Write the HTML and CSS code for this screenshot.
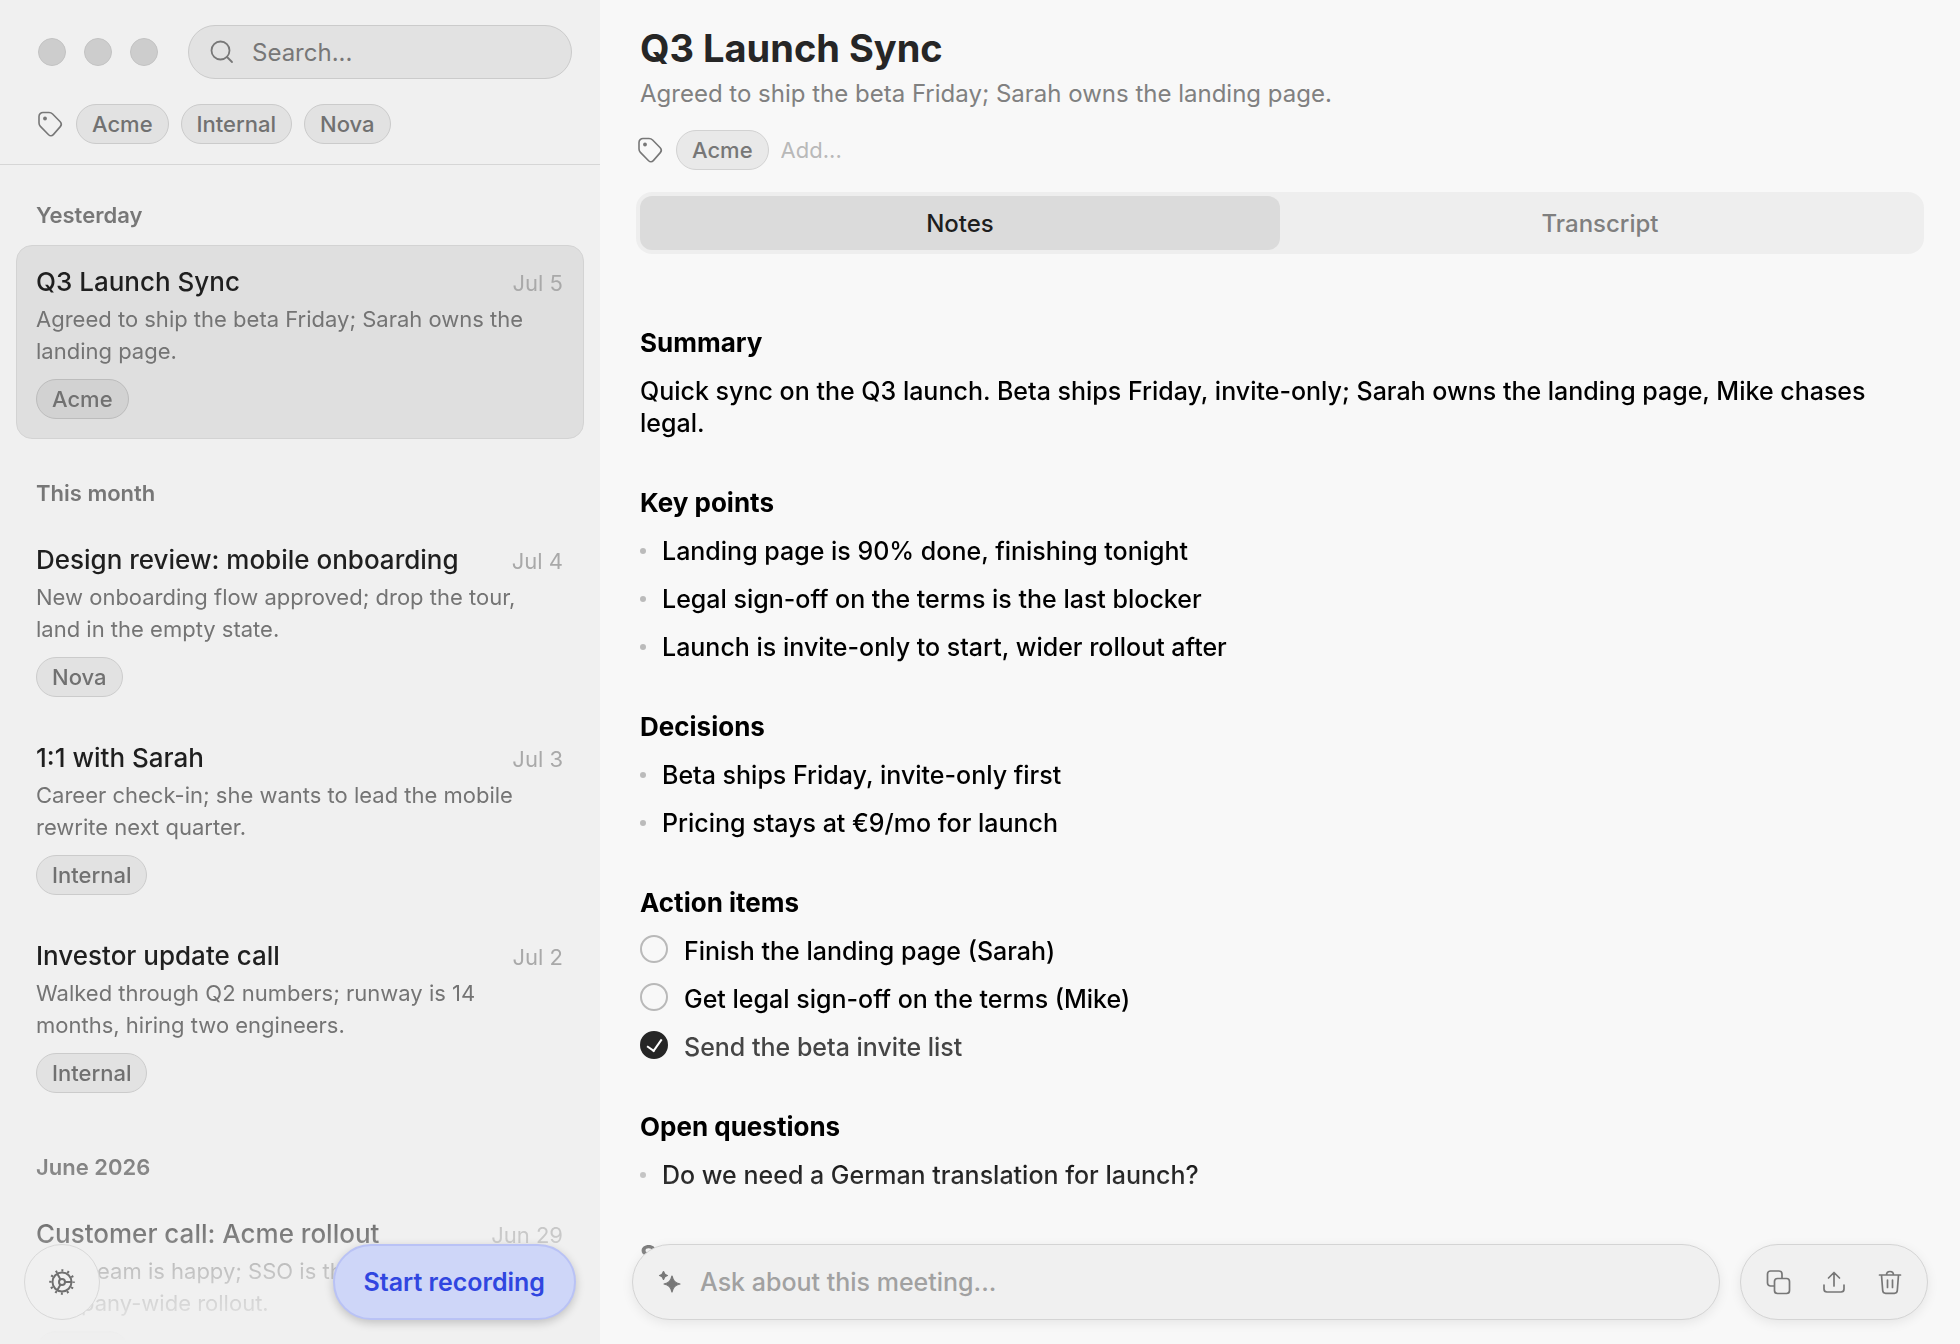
FILE: index.html
```html
<!DOCTYPE html>
<html lang="en">
<head>
<meta charset="utf-8">
<title>Q3 Launch Sync</title>
<link rel="stylesheet" href="styles.css">
</head>
<body>
<svg class="sprite" aria-hidden="true">
  <symbol id="tag" viewBox="1 0 26 28"><path d="M2 6.500a4 4 0 0 1 4-4h6c1.500 0 2.600.5 3.600 1.500l7.600 7.800c1.500 1.600 1.500 3.200.1 4.800l-7 8c-1.400 1.600-3.200 1.600-4.700.1L3.400 16.400C2.500 15.400 2 14.300 2 13Z" fill="none" stroke="currentColor" stroke-width="1.600"/><circle cx="8" cy="8.500" r="1.900" fill="currentColor"/></symbol>
</svg>
<div class="app">
  <aside class="sidebar">
    <header class="side-head">
      <div class="top-row">
        <div class="lights"><i></i><i></i><i></i></div>
        <label class="search">
          <svg width="24" height="24" viewBox="0 0 24 24" fill="none" stroke="currentColor" stroke-width="1.800" stroke-linecap="round"><circle cx="10.500" cy="10.500" r="9"/><path d="m17 17 5 5"/></svg>
          <input type="search" placeholder="Search..." aria-label="Search">
        </label>
      </div>
      <div class="tags">
        <svg class="tag-icon"><use href="#tag"/></svg>
        <button class="chip">Acme</button><button class="chip">Internal</button><button class="chip">Nova</button>
      </div>
    </header>
    <nav class="list">
      <h2 class="group first">Yesterday</h2>
      <a class="item selected" href="#"><span class="row"><b>Q3 Launch Sync</b><time>Jul 5</time></span><span class="desc">Agreed to ship the beta Friday; Sarah owns the landing page.</span><span class="chip">Acme</span></a>
      <h2 class="group">This month</h2>
      <a class="item" href="#"><span class="row"><b>Design review: mobile onboarding</b><time>Jul 4</time></span><span class="desc">New onboarding flow approved; drop the tour, land in the empty state.</span><span class="chip">Nova</span></a>
      <a class="item" href="#"><span class="row"><b>1:1 with Sarah</b><time>Jul 3</time></span><span class="desc">Career check-in; she wants to lead the mobile rewrite next quarter.</span><span class="chip">Internal</span></a>
      <a class="item" href="#"><span class="row"><b>Investor update call</b><time>Jul 2</time></span><span class="desc">Walked through Q2 numbers; runway is 14 months, hiring two engineers.</span><span class="chip">Internal</span></a>
      <h2 class="group">June 2026</h2>
      <a class="item" href="#"><span class="row"><b>Customer call: Acme rollout</b><time>Jun 29</time></span><span class="desc">Data team is happy; SSO is the last step to company-wide rollout.</span><span class="chip">Acme</span></a>
    </nav>
    <footer class="side-foot">
      <button class="round" aria-label="Settings">
        <svg width="28" height="28" viewBox="0 0 28 28" fill="none" stroke="currentColor" stroke-width="2"><circle cx="14" cy="14" r="9.500"/><circle cx="14" cy="14" r="3"/><path d="M17 14h7M12.500 11.400 9.300 5.800M12.500 16.600l-3.200 5.600"/><circle cx="14" cy="14" r="11.600" stroke-width="2.400" stroke-dasharray="2 4.074" stroke-dashoffset="1"/></svg>
      </button>
      <button class="record">Start recording</button>
    </footer>
  </aside>
  <main class="main">
    <header class="main-head">
      <h1>Q3 Launch Sync</h1>
      <p class="subtitle">Agreed to ship the beta Friday; Sarah owns the landing page.</p>
      <div class="tags main-tags">
        <svg class="tag-icon"><use href="#tag"/></svg>
        <button class="chip">Acme</button>
        <input class="add" type="text" placeholder="Add..." aria-label="Add tag">
      </div>
      <div class="tabs" role="tablist">
        <button role="tab" aria-selected="true">Notes</button>
        <button role="tab" aria-selected="false">Transcript</button>
      </div>
    </header>
    <article class="notes">
      <section><h2>Summary</h2><p>Quick sync on the Q3 launch. Beta ships Friday, invite-only; Sarah owns the landing page, Mike chases legal.</p></section>
      <section><h2>Key points</h2><ul><li>Landing page is 90% done, finishing tonight</li><li>Legal sign-off on the terms is the last blocker</li><li>Launch is invite-only to start, wider rollout after</li></ul></section>
      <section><h2>Decisions</h2><ul><li>Beta ships Friday, invite-only first</li><li>Pricing stays at €9/mo for launch</li></ul></section>
      <section><h2>Action items</h2>
        <div class="todos">
          <label><input type="checkbox"><span>Finish the landing page (Sarah)</span></label>
          <label><input type="checkbox"><span>Get legal sign-off on the terms (Mike)</span></label>
          <label><input type="checkbox" checked><span>Send the beta invite list</span></label>
        </div>
      </section>
      <section><h2>Open questions</h2><ul><li>Do we need a German translation for launch?</li></ul></section>
      <section><h2>Sources</h2></section>
    </article>
    <footer class="main-foot">
      <label class="ask">
        <svg width="24" height="24" viewBox="0 0 24 24" fill="currentColor"><path d="M14 6c1.200 5 3 6.800 8 8-5 1.200-6.800 3-8 8-1.200-5-3-6.800-8-8 5-1.200 6.800-3 8-8ZM5.500 1.500c.6 2.800 1.500 3.500 4 4-2.500.5-3.400 1.200-4 4-.6-2.800-1.500-3.500-4-4 2.500-.5 3.400-1.200 4-4Z" stroke="currentColor" stroke-width="1.200" stroke-linejoin="round"/></svg>
        <input type="text" placeholder="Ask about this meeting..." aria-label="Ask about this meeting">
      </label>
      <div class="actions">
        <button aria-label="Copy"><svg width="28" height="28" viewBox="0 0 28 28" fill="none" stroke="currentColor" stroke-width="1.700"><rect x="10.500" y="10.500" width="15" height="15" rx="3"/><path d="M10 18H6.500a3 3 0 0 1-3-3V6a3 3 0 0 1 3-3H15a3 3 0 0 1 3 3v4"/></svg></button>
        <button aria-label="Share"><svg width="28" height="28" viewBox="0 0 28 28" fill="none" stroke="currentColor" stroke-width="1.700" stroke-linecap="round" stroke-linejoin="round"><path d="M14 18V4.500M8.500 10 14 4.500l5.500 5.500M4 17v4a3 3 0 0 0 3 3h14a3 3 0 0 0 3-3v-4"/></svg></button>
        <button aria-label="Delete"><svg width="28" height="28" viewBox="0 0 28 28" fill="none" stroke="currentColor" stroke-width="1.700" stroke-linecap="round"><path d="M3.500 7h21M5.500 7l1.200 15.500a3 3 0 0 0 3 2.800h8.600a3 3 0 0 0 3-2.800L22.500 7M10.500 7c0-2 1.500-3.500 3.500-3.500S17.500 5 17.500 7M11.500 12v7.500M16.500 12v7.500"/></svg></button>
      </div>
    </footer>
  </main>
</div>
</body>
</html>
```

FILE: styles.css
```css
* { box-sizing: border-box; }
body { margin: 0; font-family: Inter, "Liberation Sans", sans-serif; color: #000; background: #f8f8f8; }
h1, h2, p, ul { margin: 0; padding: 0; }
button, input { font: inherit; color: inherit; border: 0; background: none; padding: 0; margin: 0; outline: 0; }
input { min-width: 0; }
svg { flex: none; display: block; }
.sprite { position: absolute; width: 0; height: 0; }
.app { display: grid; grid-template-columns: 600px 1fr; height: 100vh; overflow: hidden; }

.sidebar { background: #f0f0f0; display: flex; flex-direction: column; position: relative; min-height: 0; }
.side-head { padding: 25px 28px 20px 38px; border-bottom: 1px solid #d6d6d6; }
.top-row { display: flex; align-items: center; gap: 30px; }
.lights { display: flex; gap: 18px; }
.lights i { width: 28px; height: 28px; border-radius: 50%; background: #cdcdcd; border: 1px solid #c3c3c3; }
.search { flex: 1; min-width: 0; height: 54px; border: 1px solid #cbcbcb; border-radius: 27px; background: #e2e2e2; display: flex; align-items: center; gap: 18px; padding: 0 21px; color: #777; font-size: 24px; }
.search input { flex: 1; }
.search input::placeholder { color: #777; opacity: 1; }
.tags { display: flex; align-items: center; gap: 12px; margin-top: 25px; }
.tag-icon { width: 26px; height: 28px; color: #777; }
.chip { display: inline-flex; align-items: center; height: 40px; padding: 0 15px; border: 1px solid #cbcbcb; border-radius: 20px; background: #e2e2e2; color: #717171; font-size: 22px; font-weight: 500; }

.list { flex: 1; min-height: 0; overflow: hidden; padding: 0 16px; -webkit-mask-image: linear-gradient(#000 calc(100% - 200px), transparent); mask-image: linear-gradient(#000 calc(100% - 200px), transparent); }
.group { font-size: 22px; line-height: 28px; font-weight: 600; color: #777; padding: 40px 20px 16px; }
.group.first { padding-top: 36px; }
.item { display: flex; flex-direction: column; align-items: flex-start; height: 194px; padding: 20px 20px 0 19px; border: 1px solid transparent; border-radius: 16px; color: inherit; text-decoration: none; }
.item + .item { margin-top: 4px; }
.item.selected { background: #dfdfdf; border-color: #d3d3d3; }
.row { display: flex; width: 100%; justify-content: space-between; align-items: baseline; line-height: 32px; }
.row b { font-size: 26px; font-weight: 500; color: #1f1f1f; }
.row time { font-size: 22px; color: #a9a9a9; }
.desc { font-size: 22px; line-height: 32px; color: #747474; margin: 4px 0 12px; }
.selected .chip { background: #d2d2d2; border-color: #bcbcbc; }

.side-foot { position: absolute; inset: auto 24px 24px; display: flex; justify-content: space-between; }
.round { width: 76px; height: 76px; border-radius: 50%; border: 1px solid #d8d8d8; background: #f0f0f0; color: #6f6f6f; display: grid; place-items: center; }
.record { height: 76px; padding: 0 29px; border: 2px solid #b9c2f5; border-radius: 38px; background: #ced6f8; color: #3046e0; font-size: 25px; font-weight: 600; box-shadow: 0 3px 10px #00000033; }

.main { position: relative; display: flex; flex-direction: column; min-width: 0; min-height: 0; }
.main-head { padding: 24px 36px 0; }
h1 { font-size: 38px; line-height: 48px; font-weight: 700; color: #262626; padding-left: 4px; }
.subtitle { font-size: 24px; line-height: 32px; color: #808080; padding: 6px 4px 0; }
.main-tags { margin-top: 20px; padding-left: 2px; }
.main .chip { background: #e9e9e9; border-color: #d2d2d2; color: #777; }
.add { font-size: 22px; width: 200px; }
.add::placeholder { color: #b9b9b9; opacity: 1; }
.tabs { display: grid; grid-template-columns: 1fr 1fr; margin-top: 22px; padding: 4px; border-radius: 16px; background: #eee; height: 62px; }
.tabs button { border-radius: 12px; font-size: 24px; font-weight: 500; color: #7f7f7f; }
.tabs [aria-selected="true"] { background: #dbdbdb; color: #1e1e1e; }
.notes { flex: 1; min-height: 0; overflow: hidden; padding: 73px 40px 0; display: flex; flex-direction: column; gap: 48px; font-size: 25px; font-weight: 450; line-height: 32px; -webkit-mask-image: linear-gradient(#000 calc(100% - 200px), transparent); mask-image: linear-gradient(#000 calc(100% - 200px), transparent); }
.notes h2 { font-size: 26px; font-weight: 700; margin-bottom: 16px; }
.notes ul, .todos { list-style: none; display: flex; flex-direction: column; gap: 16px; }
.notes li { display: flex; align-items: center; gap: 16px; }
.notes li::before { content: ""; width: 6px; height: 6px; border-radius: 50%; background: #bbb; }
.todos label { display: flex; gap: 16px; }
.todos input { appearance: none; width: 28px; height: 28px; border: 2px solid #b9b9b9; border-radius: 50%; display: grid; place-items: center; }
.todos input:checked { background: #262626; border-color: #262626; }
.todos input:checked::after { content: ""; width: 7px; height: 13px; border: solid #fff; border-width: 0 2px 2px 0; transform: rotate(35deg); margin-bottom: 4px; }
.todos input:checked + span { color: #454545; }

.main-foot { position: absolute; inset: auto 32px 24px; display: flex; gap: 20px; }
.ask, .actions { height: 76px; border: 1px solid #d4d4d4; border-radius: 38px; background: #f0f0f0; box-shadow: 0 3px 12px #00000014; display: flex; align-items: center; color: #777; }
.ask { flex: 1; gap: 18px; padding: 0 25px; font-size: 25px; }
.ask input { flex: 1; font-weight: 450; }
.ask input::placeholder { color: #a1a1a1; opacity: 1; }
.actions { gap: 28px; padding: 0 23px; }
```
